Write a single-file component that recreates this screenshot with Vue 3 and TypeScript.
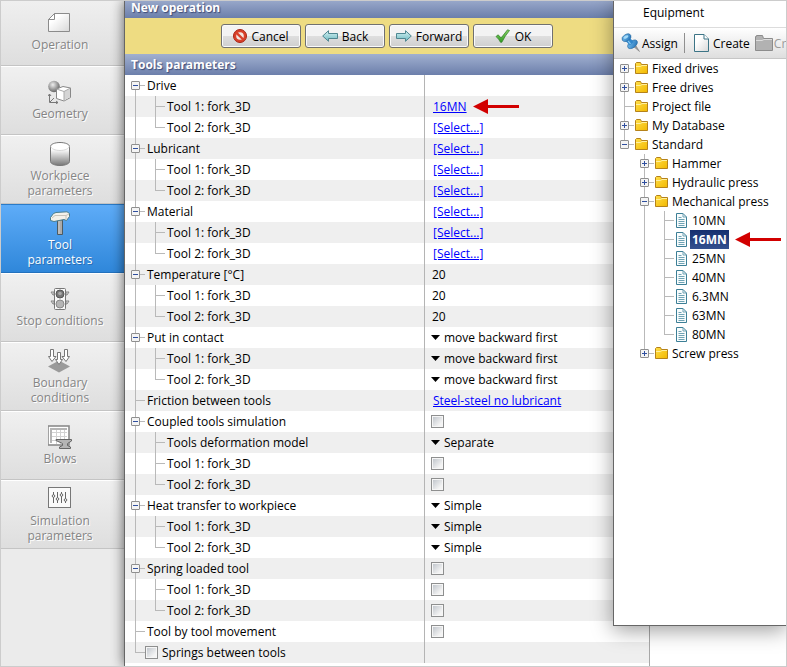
<script setup lang="ts">
import { computed, h, reactive, ref } from 'vue'

interface RailProps {
  size: number
  up?: boolean
  down?: boolean
  stub?: boolean
  box?: string
}

// One 20px wide column of tree lines, with an optional expander box
const Rail = (p: RailProps) => {
  const mid = (p.size - 1) / 2
  let d = ''
  if (p.up) d += `M10.5 0V${mid + 1}`
  if (p.down) d += `M10.5 ${mid}V${p.size}`
  if (p.stub) d += `M10 ${mid + 0.5}H20`
  const parts = [h('path', { d, stroke: '#b9b9b9', fill: 'none' })]
  if (p.box) {
    parts.push(
      h('rect', { x: 6.5, y: mid - 3.5, width: 8, height: 8, rx: 0.5, fill: '#f4f4f4', stroke: '#8f8f8f' }),
      h('path', {
        d: `M8 ${mid + 0.5}h5` + (p.box === '+' ? `M10.5 ${mid - 2}v5` : ''),
        stroke: '#2f4f9f',
        fill: 'none',
      }),
    )
  }
  return h('svg', { width: 20, height: p.size, viewBox: `0 0 20 ${p.size}`, 'aria-hidden': 'true' }, parts)
}
Rail.props = {
  size: Number,
  up: Boolean,
  down: Boolean,
  stub: Boolean,
  box: String,
}

const steps = [
  { id: 'operation', label: 'Operation' },
  { id: 'geometry', label: 'Geometry' },
  { id: 'workpiece', label: 'Workpiece parameters' },
  { id: 'tool', label: 'Tool parameters' },
  { id: 'stop', label: 'Stop conditions' },
  { id: 'boundary', label: 'Boundary conditions' },
  { id: 'blows', label: 'Blows' },
  { id: 'simulation', label: 'Simulation parameters' },
]
const activeStep = ref('tool')

type Kind = 'none' | 'link' | 'number' | 'select' | 'check'
interface Param {
  label: string
  kind: Kind
  value?: string
  children?: Param[]
  marked?: boolean
  optional?: boolean
}

const pair = (kind: Kind, first?: string, second = first): Param[] => [
  { label: 'Tool 1: fork_3D', kind, value: first },
  { label: 'Tool 2: fork_3D', kind, value: second },
]
const pick = '[Select...]'
const move = 'move backward first'

const params: Param[] = [
  {
    label: 'Drive',
    kind: 'none',
    children: [
      { label: 'Tool 1: fork_3D', kind: 'link', value: '16MN', marked: true },
      { label: 'Tool 2: fork_3D', kind: 'link', value: pick },
    ],
  },
  { label: 'Lubricant', kind: 'link', value: pick, children: pair('link', pick) },
  { label: 'Material', kind: 'link', value: pick, children: pair('link', pick) },
  { label: 'Temperature [°C]', kind: 'number', value: '20', children: pair('number', '20') },
  { label: 'Put in contact', kind: 'select', value: move, children: pair('select', move) },
  { label: 'Friction between tools', kind: 'link', value: 'Steel-steel no lubricant' },
  {
    label: 'Coupled tools simulation',
    kind: 'check',
    children: [{ label: 'Tools deformation model', kind: 'select', value: 'Separate' }, ...pair('check')],
  },
  { label: 'Heat transfer to workpiece', kind: 'select', value: 'Simple', children: pair('select', 'Simple') },
  { label: 'Spring loaded tool', kind: 'check', children: pair('check') },
  { label: 'Tool by tool movement', kind: 'check' },
  { label: 'Springs between tools', kind: 'none', optional: true },
]

const closed = reactive(new Set<string>())
const toggle = (label: string) => {
  if (!closed.delete(label)) closed.add(label)
}

const rows = computed(() =>
  params.flatMap((p, i) => {
    const first = i === 0
    const last = i === params.length - 1
    const own = { p, key: `p${i}`, level: 0, first, last, lastChild: false }
    const kids = closed.has(p.label) ? [] : (p.children ?? [])
    return [
      own,
      ...kids.map((c, j) => ({
        p: c,
        key: `p${i}-${j}`,
        level: 1,
        first,
        last,
        lastChild: j === kids.length - 1,
      })),
    ]
  }),
)

interface TreeRow {
  label: string
  level: number
  box?: string
  up: boolean
  down: boolean
  doc?: boolean
}
const press = (label: string, down = true): TreeRow => ({ label, level: 2, up: true, down, doc: true })
const tree: TreeRow[] = [
  { label: 'Fixed drives', level: 0, box: '+', up: false, down: true },
  { label: 'Free drives', level: 0, box: '+', up: true, down: true },
  { label: 'Project file', level: 0, up: true, down: true },
  { label: 'My Database', level: 0, box: '+', up: true, down: true },
  { label: 'Standard', level: 0, box: '-', up: true, down: false },
  { label: 'Hammer', level: 1, box: '+', up: true, down: true },
  { label: 'Hydraulic press', level: 1, box: '+', up: true, down: true },
  { label: 'Mechanical press', level: 1, box: '-', up: true, down: true },
  press('10MN'),
  press('16MN'),
  press('25MN'),
  press('40MN'),
  press('6.3MN'),
  press('63MN'),
  press('80MN', false),
  { label: 'Screw press', level: 1, box: '+', up: true, down: false },
]
const chosen = ref('16MN')
</script>

<template>
  <div class="frame">
    <svg class="defs" width="0" height="0" aria-hidden="true">
      <defs>
        <linearGradient id="g-can" x1="0" y1="0" x2="0" y2="1">
          <stop offset="0.3" stop-color="#fff" />
          <stop offset="1" stop-color="#777" />
        </linearGradient>
        <radialGradient id="g-ball" cx="0.4" cy="0.35" r="0.65">
          <stop offset="0" stop-color="#eee" />
          <stop offset="1" stop-color="#666" />
        </radialGradient>
        <linearGradient id="g-page" x1="0" y1="0" x2="1" y2="1">
          <stop offset="0.3" stop-color="#fff" />
          <stop offset="1" stop-color="#d8d8d8" />
        </linearGradient>
        <linearGradient id="g-folder" x1="0" y1="0" x2="1" y2="1">
          <stop offset="0" stop-color="#ffdf4a" />
          <stop offset="1" stop-color="#f2b800" />
        </linearGradient>
        <linearGradient id="g-arrow" x1="0" y1="0" x2="0" y2="1">
          <stop offset="0" stop-color="#d8f4f4" />
          <stop offset="1" stop-color="#6cb8c0" />
        </linearGradient>
        <linearGradient id="g-tick" x1="0" y1="0" x2="0" y2="1">
          <stop offset="0" stop-color="#8ad468" />
          <stop offset="1" stop-color="#2f9a22" />
        </linearGradient>
        <linearGradient id="g-pin" x1="0" y1="0" x2="1" y2="1">
          <stop offset="0" stop-color="#7cc4f0" />
          <stop offset="1" stop-color="#1d6db5" />
        </linearGradient>
      </defs>
    </svg>

    <nav class="steps">
      <button
        v-for="s in steps"
        :key="s.id"
        type="button"
        class="step"
        :class="{ active: s.id === activeStep }"
        @click="activeStep = s.id"
      >
        <svg width="24" height="24" viewBox="0 0 24 24" fill="none" aria-hidden="true">
          <g v-if="s.id === 'operation'">
            <path d="M6.5 2.5H21.5V20.5H0.500V8.500Z" fill="url(#g-page)" stroke="#8b8b8b" />
            <path d="M6.500 2.500V8.500H0.500Z" fill="#fff" stroke="#8b8b8b" />
          </g>
          <g v-else-if="s.id === 'geometry'">
            <circle cx="6" cy="6.500" r="5.800" fill="url(#g-ball)" />
            <path d="M8.500 9L15 6.500L22.500 8V17.500L16 21L8.500 18.500Z" fill="#fff" stroke="#888" />
            <path d="M16 11.500L22 8.500V17L16 20.500Z" fill="#d5d5d5" />
            <path d="M8.500 9L16 11.500L22.500 8M16 11.500V21" stroke="#aaa" />
            <path d="M1.500 14V22.500H10M0 16L1.500 14L3 16M8 21L10 22.500L8 24M2 22L6 18" stroke="#777" />
          </g>
          <g v-else-if="s.id === 'workpiece'">
            <path
              d="M2.500 4.500V19.500C2.500 21.700 6.700 23.500 12 23.500S21.500 21.700 21.500 19.500V4.500C21.500 2.300 17.300 0.500 12 0.500S2.500 2.300 2.500 4.500Z"
              fill="url(#g-can)"
              stroke="#777"
            />
            <path d="M3 4.500C3 6.700 7 8.500 12 8.500S21 6.700 21 4.500" stroke="#d8d8d8" />
          </g>
          <g v-else-if="s.id === 'tool'">
            <path d="M9.500 9H14.500V23.500H9.500Z" fill="#aaa" stroke="#4d5a60" />
            <path d="M11 10V23" stroke="#ccc" />
            <path
              d="M2.500 6.500L5.500 2.500L8 1.500L19 0.800L21.500 2.500V5.500L18.500 9.500L16 8.500L6 10.500L2.500 9.500Z"
              fill="#f4f1ea"
              stroke="#4a7d8c"
            />
            <path d="M4 7L7 4.500H18L21 3M18 4.500V8.500" stroke="#c9c4ba" />
          </g>
          <g v-else-if="s.id === 'stop'">
            <path d="M3 5H6V8H5ZM3 14H6V17H5ZM18 5H21L19 8H18ZM18 14H21L19 17H18Z" fill="#ddd" stroke="#888" />
            <rect x="6.500" y="1.500" width="11" height="21" rx="1" fill="#f8f8f8" stroke="#777" />
            <circle cx="12" cy="7" r="4" fill="#777" stroke="#555" />
            <circle cx="12" cy="6.500" r="1.800" fill="#aaa" />
            <circle cx="12" cy="17" r="4" fill="#b5b5b5" stroke="#888" />
          </g>
          <g v-else-if="s.id === 'boundary'">
            <path d="M0 17.500L11 11.500L22 17.500L11 23.500Z" fill="#9a9a9a" />
            <g fill="#fff" stroke="#777">
              <path d="M2.500 0.500H5.500V7.500H8L4 12.500L0.500 7.500H2.500Z" />
              <path d="M16.500 0.500H19.500V7.500H21.500L18 12.500L14 7.500H16.500Z" />
              <path d="M9.500 3.500H12.500V10.500H14.500L11 15.500L7.500 10.500H9.500Z" />
            </g>
          </g>
          <g v-else-if="s.id === 'blows'">
            <rect x="0" y="1" width="21" height="19" fill="#fff" stroke="#8b8b8b" stroke-width="1.600" />
            <path d="M4 7.500H19M4 11.500H19M4 15.500H19M8.500 4V19M12.500 4V19M16.500 4V19" stroke="#d2d2d2" />
            <path d="M2 3H19V5H4V18H2Z" fill="#b5b5b5" />
            <path
              d="M8 14.500H23.500V16L19.500 18.500V20.500L22.500 22V23.500H11.500V22L14.500 20.500V18.500L8 15.500Z"
              fill="#b5b5b5"
              stroke="#666"
            />
          </g>
          <g v-else>
            <rect x="0.500" y="0.500" width="22" height="20" fill="#fafafa" stroke="#777" />
            <path d="M5.500 5V16M9.500 5V16M13.500 5V16M17.500 5V16" stroke="#666" />
            <g fill="#fff" stroke="#666">
              <circle cx="5.500" cy="9" r="1.300" />
              <circle cx="9.500" cy="12" r="1.300" />
              <circle cx="13.500" cy="8" r="1.300" />
              <circle cx="17.500" cy="13" r="1.300" />
            </g>
          </g>
        </svg>
        <span class="step-label">{{ s.label }}</span>
      </button>
    </nav>

    <main class="panel">
      <h1 class="bar bar-top">New operation</h1>
      <div class="actions">
        <button type="button" class="action">
          <svg width="14" height="14" viewBox="0 0 14 14" aria-hidden="true">
            <circle cx="7" cy="7" r="6.500" fill="#d9412b" stroke="#a82414" />
            <circle cx="7" cy="7" r="3.800" fill="#f2e6e2" />
            <path d="M3.500 3.800L10.300 10.500" stroke="#d9412b" stroke-width="2.400" />
          </svg>
          Cancel
        </button>
        <button type="button" class="action">
          <svg width="16" height="12" viewBox="0 0 16 12" aria-hidden="true">
            <path d="M0.700 6L6.500 0.700V3.500H15.500V8.500H6.500V11.300Z" fill="url(#g-arrow)" stroke="#4f8791" />
          </svg>
          Back
        </button>
        <button type="button" class="action">
          <svg width="16" height="12" viewBox="0 0 16 12" aria-hidden="true">
            <path d="M15.300 6L9.500 0.700V3.500H0.500V8.500H9.500V11.300Z" fill="url(#g-arrow)" stroke="#4f8791" />
          </svg>
          Forward
        </button>
        <button type="button" class="action">
          <svg width="16" height="14" viewBox="0 0 16 14" aria-hidden="true">
            <path
              d="M1 7.500L3.200 5.800L6 9L12.500 0.800L14.500 1.500C11.500 5 9 9 6.800 13.300H5.500C4.500 11.300 3 9.200 1 7.500Z"
              fill="url(#g-tick)"
              stroke="#2d7d22"
              stroke-width="0.700"
            />
          </svg>
          OK
        </button>
      </div>
      <h2 class="bar">Tools parameters</h2>
      <table class="params">
        <tbody>
          <tr v-for="r in rows" :key="r.key">
            <th scope="row">
              <div class="name">
                <template v-if="r.level === 0">
                  <button
                    v-if="r.p.children"
                    type="button"
                    class="twist"
                    :aria-label="'Toggle ' + r.p.label"
                    @click="toggle(r.p.label)"
                  >
                    <Rail :size="21" :up="!r.first" down stub :box="closed.has(r.p.label) ? '+' : '-'" />
                  </button>
                  <Rail v-else :size="21" up :down="!r.last" stub />
                </template>
                <template v-else>
                  <Rail :size="21" :up="!r.last" :down="!r.last" />
                  <Rail :size="21" up :down="!r.lastChild" stub />
                </template>
                <input v-if="r.p.optional" :id="r.key" type="checkbox" class="check" />
                <label :for="r.key">{{ r.p.label }}</label>
              </div>
            </th>
            <td>
              <div class="value">
                <a v-if="r.p.kind === 'link'" :id="r.key" href="#">{{ r.p.value }}</a>
                <input v-else-if="r.p.kind === 'number'" :id="r.key" class="number" type="text" :value="r.p.value" />
                <input v-else-if="r.p.kind === 'check'" :id="r.key" class="check" type="checkbox" />
                <template v-else-if="r.p.kind === 'select'">
                  <svg width="9" height="5" viewBox="0 0 9 5" aria-hidden="true"><path d="M0 0H9L4.500 5Z" /></svg>
                  <select :id="r.key" class="choice">
                    <option>{{ r.p.value }}</option>
                  </select>
                </template>
                <svg v-if="r.p.marked" class="pointer" width="46" height="15" viewBox="0 0 46 15" aria-hidden="true">
                  <path d="M0 7.500L15 0V6H46V9H15V15Z" fill="#d20000" />
                </svg>
              </div>
            </td>
          </tr>
        </tbody>
      </table>
    </main>

    <aside class="window">
      <h2 class="title">Equipment</h2>
      <div class="toolbar">
        <button type="button" class="tool">
          <svg width="20" height="20" viewBox="0 0 20 20" aria-hidden="true">
            <path d="M12.500 13.500L18.500 18.500L14.500 12Z" fill="#999" stroke="#777" stroke-width="0.500" />
            <ellipse cx="11.500" cy="11.300" rx="5.600" ry="3.300" transform="rotate(-38 11.500 11.300)" fill="url(#g-pin)" stroke="#2a6ea6" stroke-width="0.700" />
            <path d="M4 7.500L8.500 4.500L12.800 9L8.800 12.300Z" fill="#3388cc" />
            <path d="M6.500 7L9.500 10.800" stroke="#8accf2" stroke-width="1.200" />
            <ellipse cx="5.500" cy="4.700" rx="4.800" ry="3.200" transform="rotate(-30 5.500 4.700)" fill="url(#g-pin)" stroke="#2a6ea6" stroke-width="0.700" />
            <ellipse cx="5" cy="4" rx="2.600" ry="1.300" transform="rotate(-30 5 4)" fill="#a4daf8" />
          </svg>
          Assign
        </button>
        <span class="rule"></span>
        <button type="button" class="tool">
          <svg class="sheet" width="15" height="18" viewBox="0 0 15 18" aria-hidden="true">
            <path d="M0.500 0.500H10L14.500 5V17.500H0.500Z" fill="url(#g-page)" stroke="#3c7486" />
            <path d="M10 0.500V5H14.500" fill="#fff" stroke="#3c7486" />
          </svg>
          Create
        </button>
        <button type="button" class="tool new-folder" disabled>
          <svg width="18" height="16" viewBox="0 0 18 16" aria-hidden="true">
            <path d="M0.500 15.500V1.500H1.500V0.500H7.500L8.500 3.500H17.500V15.500Z" fill="#b2b2b2" stroke="#8c8c8c" />
            <path d="M1 5.500H7L9 4.500H17" stroke="#ddd" fill="none" />
          </svg>
          Create
        </button>
      </div>
      <ul class="tree">
        <li v-for="t in tree" :key="t.label" class="node">
          <Rail v-for="n in t.level" :key="n" :size="19" :up="n === 2" :down="n === 2" />
          <button v-if="t.box" type="button" class="twist" :aria-label="'Toggle ' + t.label">
            <Rail :size="19" :up="t.up" :down="t.down" stub :box="t.box" />
          </button>
          <Rail v-else :size="19" :up="t.up" :down="t.down" stub />
          <svg v-if="t.doc" class="glyph" width="16" height="15" viewBox="0 0 16 15" aria-hidden="true">
            <path d="M2.500 0.500H9L12.500 4V14.500H2.500Z" fill="#f8fcfd" stroke="#3c7f96" />
            <path d="M9 0.500V4H12.500M4.500 4.500H7.500M4.500 6.500H10.500M4.500 8.500H10.500M4.500 10.500H10.500M4.500 12.500H10.500" stroke="#6fa3b4" fill="none" />
          </svg>
          <svg v-else class="glyph" width="16" height="13" viewBox="0 0 16 13" aria-hidden="true">
            <path d="M1.500 11.500V1.500L2.500 0.500H6.500L7.500 2.500H13.500V11.500Z" fill="url(#g-folder)" stroke="#b5821a" />
            <path d="M2 4.500H6.500L8 3.500H13" stroke="#fff0a0" fill="none" />
          </svg>
          <button type="button" class="leaf" :class="{ chosen: t.label === chosen }" @click="chosen = t.label">
            {{ t.label }}
          </button>
          <svg v-if="t.label === '16MN'" class="pointer" width="46" height="15" viewBox="0 0 46 15" aria-hidden="true">
            <path d="M0 7.500L15 0V6H46V9H15V15Z" fill="#d20000" />
          </svg>
        </li>
      </ul>
    </aside>
  </div>
</template>

<style>
body {
  margin: 0;
}
</style>

<style scoped>
.frame {
  position: relative;
  display: flex;
  box-sizing: border-box;
  min-height: 100vh;
  border: 1px solid #ccc;
  overflow: hidden;
  background: #fff;
  color: #000;
  font-family: 'Open Sans', 'Noto Sans', sans-serif;
  font-size: 12px;
  line-height: 15px;
}

.frame svg {
  flex: none;
  display: block;
}

.frame .defs {
  position: absolute;
}

button,
input,
select {
  margin: 0;
  padding: 0;
  border: 0;
  background: none;
  color: inherit;
  font: inherit;
}

h1,
h2,
ul {
  margin: 0;
  padding: 0;
  font-size: 12px;
}

.steps {
  flex: none;
  width: 123px;
  background: #ebebeb;
}

.step {
  display: flex;
  flex-direction: column;
  align-items: center;
  justify-content: center;
  box-sizing: border-box;
  width: 100%;
  height: 69px;
  padding-right: 5px;
  border-top: 1px solid #fff;
  border-bottom: 1px solid #c4c4c4;
  background: linear-gradient(#f0f0f0, #dedede);
  color: #858585;
  text-shadow: 1px 1px 0 #fff;
}

.step:first-child {
  margin-top: -4px;
}

.step svg {
  margin-bottom: 2px;
}

.step-label {
  max-width: 90px;
  text-align: center;
}

.step.active {
  border-top-color: #2a7bc8;
  border-bottom-color: #2371bd;
  background: linear-gradient(#5eacf8, #2f87da);
  color: #fff;
  text-shadow: 1px 1px 0 #2a6cb0;
}

.panel {
  position: relative;
  flex: 1;
  min-width: 0;
  margin-right: 136px;
  border-left: 1px solid #666;
  border-right: 1px solid #a8a8a8;
  box-shadow: 0 0 12px rgba(0, 0, 0, 0.6);
  background: #fff;
  clip-path: inset(0 0 0 -14px);
}

.bar {
  box-sizing: border-box;
  height: 21px;
  padding: 3px 6px;
  background: linear-gradient(#a1b0d0, #6c7fab);
  color: #fff;
  font-weight: 700;
  text-shadow: 1px 1px 1px #3c4c78;
}

.bar-top {
  margin-top: -4px;
}

.actions {
  display: flex;
  justify-content: center;
  gap: 4px;
  padding: 6px 0;
  background: #eedc82;
}

.action {
  display: flex;
  align-items: center;
  justify-content: center;
  gap: 4px;
  box-sizing: border-box;
  width: 80px;
  height: 24px;
  border: 1px solid #707070;
  border-radius: 3px;
  background: linear-gradient(#f3f3f3 0 48%, #dedede 52%, #cfcfcf);
  box-shadow: inset 0 0 0 1px #fafafa;
}

.params {
  width: 100%;
  table-layout: fixed;
  border-collapse: collapse;
}

.params tr:nth-child(even) {
  background: #efefef;
}

.params th,
.params td {
  height: 21px;
  padding: 0;
  font-weight: 400;
  text-align: left;
}

.params th {
  width: 299px;
}

.name,
.value {
  display: flex;
  align-items: center;
  height: 21px;
  white-space: nowrap;
}

.name label {
  padding-left: 2px;
}

.name .check + label {
  padding-left: 4px;
}

.value {
  padding-left: 6px;
  border-left: 1px solid #b4b4b4;
}

.value a {
  padding-left: 2px;
  color: #00f;
  text-decoration: underline;
}

.number {
  width: 80px;
  padding-left: 1px;
}

.choice {
  appearance: none;
  padding-left: 4px;
}

.check {
  appearance: none;
  box-sizing: border-box;
  width: 13px;
  height: 13px;
  padding: 1px;
  border: 1px solid #8e8f8f;
  background:
    linear-gradient(135deg, #c2c7cd, #f4f4f4 80%) content-box,
    #f6f6f6;
}

.check:checked {
  background: #3d6fb0 content-box;
}

.pointer {
  margin-left: 6px;
}

.twist {
  display: block;
  flex: none;
}

.window {
  position: absolute;
  top: 0;
  right: 0;
  bottom: 40px;
  width: 172px;
  border-left: 1px solid #666;
  border-bottom: 1px solid #666;
  background: #fff;
  box-shadow: 0 4px 20px rgba(0, 0, 0, 0.4);
}

.title {
  padding: 4px 29px 7px;
  border-bottom: 1px solid #dcdcdc;
  font-weight: 400;
}

.toolbar {
  display: flex;
  align-items: center;
  height: 30px;
  overflow: hidden;
  border-bottom: 1px solid #c6c6c6;
  background: linear-gradient(#fff, #dedede);
}

.tool {
  display: flex;
  flex: none;
  align-items: center;
  gap: 1px;
  padding-left: 7px;
}

.tool .sheet {
  margin-right: 3px;
}

.tool.new-folder {
  padding-left: 5px;
}

.tool:disabled {
  color: #9a9a9a;
}

.rule {
  flex: none;
  width: 1px;
  height: 20px;
  margin: 0 2px 0 6px;
  background: #8f8f8f;
}

.tree {
  list-style: none;
}

.node {
  display: flex;
  align-items: center;
  height: 19px;
  white-space: nowrap;
}

.leaf {
  height: 19px;
  padding: 0 2px;
}

.leaf.chosen {
  background: linear-gradient(#16306f, #33508f);
  color: #fff;
  font-weight: 700;
}
</style>
